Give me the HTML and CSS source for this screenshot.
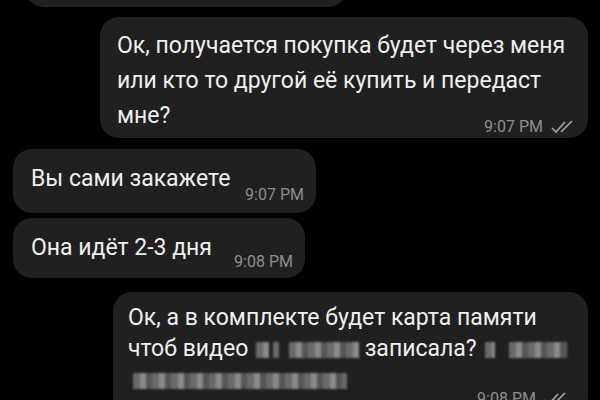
FILE: index.html
```html
<!DOCTYPE html>
<html lang="ru">

<head>
    <meta charset="UTF-8">
    <meta name="viewport" content="width=device-width, initial-scale=1.0">
    <title>Чат</title>
    <link rel="stylesheet" href="styles.css">
</head>

<body>
    <div class="chat">
        <div class="msg in cut"></div>

        <div class="msg out first">
            <p class="text">Ок, получается покупка будет через меня или кто то другой её купить и передаст мне?</p>
            <div class="meta">
                <span class="time">9:07 PM</span>
                <svg class="ticks" width="26" height="14" viewBox="0 0 26 14">
                    <path d="M1 8 L5 12 L14 2" />
                    <path d="M10 12 L21 1" />
                </svg>
            </div>
        </div>

        <div class="msg in second">
            <p class="text">Вы сами закажете</p>
            <span class="time">9:07 PM</span>
        </div>

        <div class="msg in third">
            <p class="text">Она идёт 2-3 дня</p>
            <span class="time">9:08 PM</span>
        </div>

        <div class="msg out last">
            <p class="text">Ок, а в комплекте будет карта памяти чтоб видео <span class="blur w1"></span><span class="blur w2"></span><span class="blur w3"></span> записала?<span class="blur w4"></span><span class="blur w5"></span> <span class="blur w6"></span></p>
            <div class="meta">
                <span class="time">9:08 PM</span>
                <svg class="ticks" width="26" height="14" viewBox="0 0 26 14">
                    <path d="M1 8 L5 12 L14 2" />
                    <path d="M10 12 L21 1" />
                </svg>
            </div>
        </div>
    </div>
</body>

</html>
```

FILE: styles.css
```css
* {
    margin: 0;
    padding: 0;
    box-sizing: border-box;
}

body {
    background: #000;
    font-family: Roboto, "Noto Sans", sans-serif;
    color: #efefef;
    overflow: hidden;
}

.chat {
    display: flex;
    flex-direction: column;
    width: 600px;
    height: 400px;
}

.msg {
    flex-shrink: 0;
    background: #202020;
    border-radius: 19px;
}

.in {
    align-self: flex-start;
    margin-left: 13px;
}

.out {
    align-self: flex-end;
    margin-right: 12px;
}

.cut {
    width: 322px;
    height: 40px;
    margin-top: -33px;
    margin-left: 25px;
}

.text {
    font-size: 23px;
    line-height: 35px;
}

.time {
    font-size: 16px;
    color: #8e8e8e;
    white-space: nowrap;
}

/* исходящие */
.first {
    width: 488px;
    height: 121px;
    margin-top: 10px;
    padding: 11px 11px 0 17px;
}

.meta {
    display: flex;
    justify-content: flex-end;
    align-items: center;
    gap: 8px;
    margin-top: -16px;
}

.ticks path {
    fill: none;
    stroke: #a4a4a4;
    stroke-width: 1.7;
}

/* входящие */
.second,
.third {
    display: flex;
    align-items: flex-end;
    gap: 10px;
    padding: 0 12px 0 18px;
}

.second {
    width: 303px;
    height: 64px;
    margin-top: 11px;
    padding-top: 12px;
}

.third {
    width: 292px;
    height: 60px;
    margin-top: 5px;
    padding-top: 12px;
}

.second .text,
.third .text {
    flex: 1;
    align-self: flex-start;
    white-space: nowrap;
}

.second .time {
    padding-bottom: 9px;
}

.third .time {
    padding-bottom: 7px;
}

.last {
    width: 475px;
    margin-top: 14px;
    padding: 10px 18px 8px 15px;
}

.last .text {
    line-height: 31px;
}

.last .meta {
    margin-top: -6px;
}

/* замазанные куски */
.blur {
    display: inline-block;
    height: 16px;
    vertical-align: -2px;
    background: repeating-linear-gradient(90deg, #6a6a6a 0 7px, #8a8a8a 7px 13px, #555 13px 19px);
    filter: blur(0.8px);
}

.w1 { width: 13px; margin-left: 2px; }
.w2 { width: 6px; margin-left: 4px; }
.w3 { width: 70px; margin-left: 10px; }
.w4 { width: 10px; margin-left: 8px; }
.w5 { width: 58px; margin-left: 14px; }
.w6 { width: 214px; margin-left: 5px; }
```
